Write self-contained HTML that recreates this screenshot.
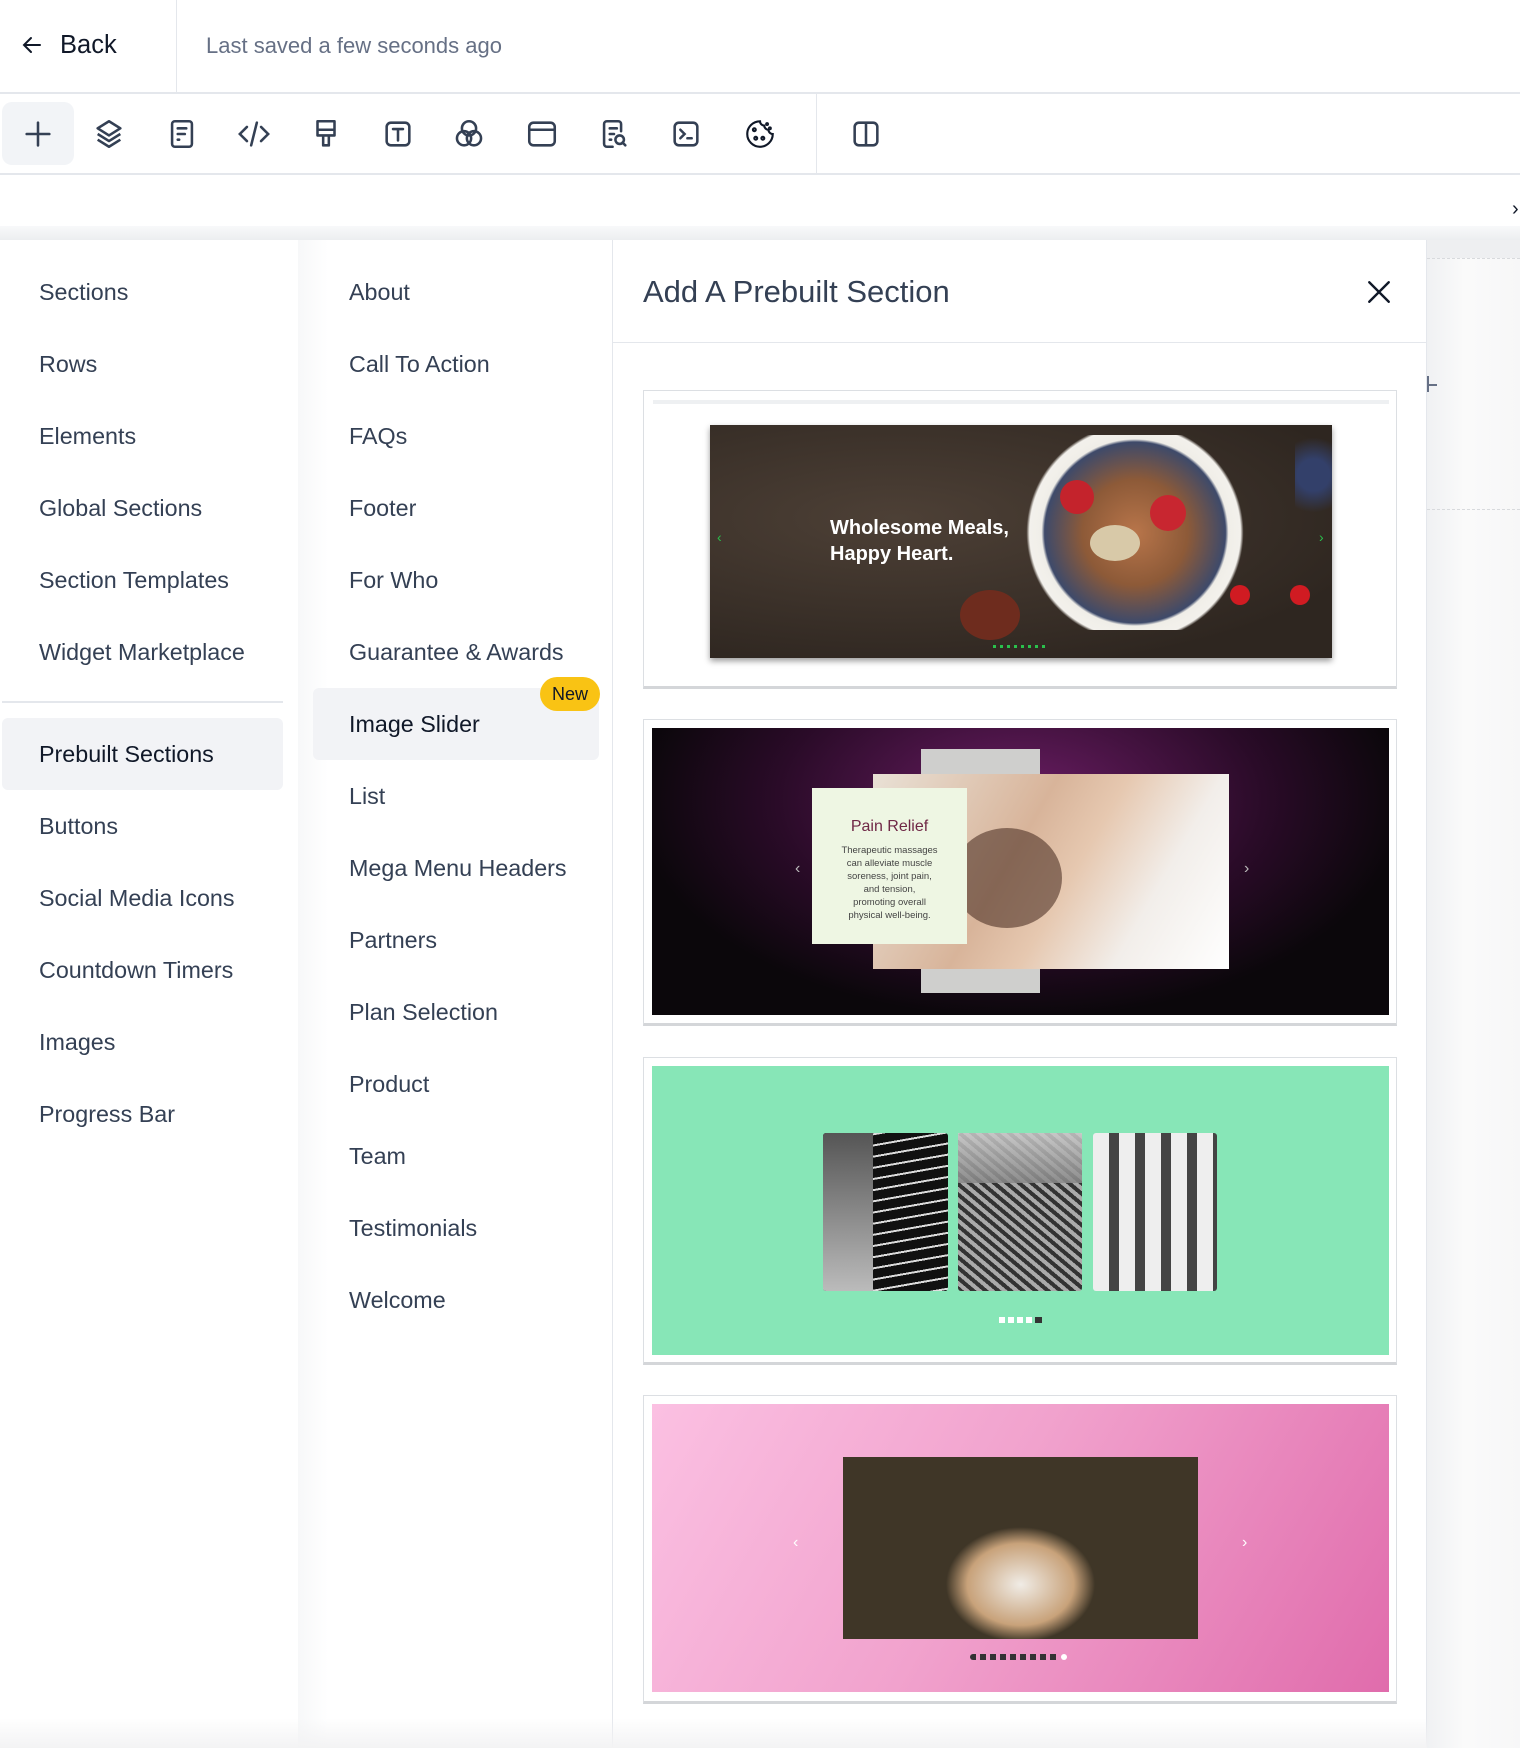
<!DOCTYPE html>
<html><head><meta charset="utf-8"><style>
*{box-sizing:border-box;margin:0;padding:0}
body{width:1520px;height:1748px;position:relative;overflow:hidden;background:#fff;font-family:"Liberation Sans",sans-serif;color:#344054}
.a{position:absolute}
.nav{position:absolute;font-size:23.3px;color:#344054;line-height:26px;white-space:nowrap}
.ic{position:absolute;top:117px;width:34px;height:34px}
.card{position:absolute;left:643px;width:754px;border:1px solid #dcdfe3;border-bottom:3px solid #d4d6d9;background:#fff}
</style></head><body>
<!-- header -->
<svg class="a" style="left:20px;top:33px" width="24" height="24" viewBox="0 0 24 24" fill="none" stroke="#101828" stroke-width="2" stroke-linecap="round"><path d="M20 12H4M11 5l-7 7 7 7"/></svg>
<div class="a" style="left:60px;top:31px;font-size:25.5px;color:#101828">Back</div>
<div class="a" style="left:176px;top:0;width:1px;height:92px;background:#e4e7ec"></div>
<div class="a" style="left:206px;top:33px;font-size:22px;color:#667085">Last saved a few seconds ago</div>
<div class="a" style="left:0;top:92px;width:1520px;height:2px;background:#e4e7ec"></div>
<!-- toolbar -->
<div class="a" style="left:2px;top:102px;width:72px;height:63px;background:#f2f4f7;border-radius:10px"></div>
<svg class="ic" style="left:21px" viewBox="0 0 24 24" fill="none" stroke="#344054" stroke-width="1.8" stroke-linecap="round"><path d="M12 4v16M4 12h16"/></svg>
<svg class="ic" style="left:92px" viewBox="0 0 24 24" fill="none" stroke="#344054" stroke-width="1.8" stroke-linejoin="round"><path d="M12 3l8 5-8 5-8-5z"/><path d="M4 12l8 5 8-5"/><path d="M4 16l8 5 8-5"/></svg>
<svg class="ic" style="left:165px" viewBox="0 0 24 24" fill="none" stroke="#344054" stroke-width="1.8" stroke-linecap="round"><rect x="5" y="3" width="14" height="18" rx="2"/><path d="M9 8h6M9 12h5M9 16h1"/></svg>
<svg class="ic" style="left:237px" viewBox="0 0 24 24" fill="none" stroke="#344054" stroke-width="1.8" stroke-linecap="round"><path d="M7 7l-5 5 5 5M17 7l5 5-5 5M14 4l-4 16"/></svg>
<svg class="ic" style="left:309px" viewBox="0 0 24 24" fill="none" stroke="#344054" stroke-width="1.8" stroke-linejoin="round"><path d="M6 3h12v10H6zM6 9h12M10 13h4v7h-4z"/></svg>
<svg class="ic" style="left:381px" viewBox="0 0 24 24" fill="none" stroke="#344054" stroke-width="1.8" stroke-linecap="round"><rect x="4" y="4" width="16" height="16" rx="3"/><path d="M8.5 8.5h7M12 8.5v8"/></svg>
<svg class="ic" style="left:452px" viewBox="0 0 24 24" fill="none" stroke="#344054" stroke-width="1.8"><circle cx="12" cy="8" r="5"/><circle cx="8.5" cy="15" r="5"/><circle cx="15.5" cy="15" r="5"/></svg>
<svg class="ic" style="left:525px" viewBox="0 0 24 24" fill="none" stroke="#344054" stroke-width="1.8"><rect x="3" y="4" width="18" height="16" rx="3"/><path d="M3 9h18"/></svg>
<svg class="ic" style="left:597px" viewBox="0 0 24 24" fill="none" stroke="#344054" stroke-width="1.8" stroke-linecap="round"><path d="M11 21H7a2 2 0 0 1-2-2V5a2 2 0 0 1 2-2h8a2 2 0 0 1 2 2v5"/><path d="M9 8h5M9 12h3M9 16h1"/><circle cx="16" cy="16" r="3"/><path d="M18 18l2 2"/></svg>
<svg class="ic" style="left:669px" viewBox="0 0 24 24" fill="none" stroke="#344054" stroke-width="1.8" stroke-linecap="round"><rect x="4" y="4" width="16" height="16" rx="3"/><path d="M8 9l3 3-3 3M13 15h3"/></svg>
<svg class="ic" style="left:743px" viewBox="0 0 24 24" fill="none" stroke="#101828" stroke-width="1.5"><path d="M12 3a9 9 0 1 0 9 9 3 3 0 0 1-3-3 3 3 0 0 1-3-3 3 3 0 0 1-3-3z"/><circle cx="8" cy="9" r="1"/><circle cx="9" cy="15" r="1"/><circle cx="14" cy="15" r="1"/><circle cx="17" cy="5" r=".6"/><circle cx="19" cy="8" r=".6"/></svg>
<div class="a" style="left:816px;top:94px;width:1px;height:80px;background:#e4e7ec"></div>
<svg class="ic" style="left:849px" viewBox="0 0 24 24" fill="none" stroke="#344054" stroke-width="1.8"><rect x="4" y="4" width="16" height="16" rx="3"/><path d="M12 4v16"/></svg>
<div class="a" style="left:0;top:173px;width:1520px;height:2px;background:#e4e7ec"></div>
<div class="a" style="left:1512px;top:198px;font-size:20px;color:#101828">›</div>
<div class="a" style="left:0;top:226px;width:1520px;height:14px;background:linear-gradient(#f8f9fa,#eceef0)"></div>
<!-- right gray area -->
<div class="a" style="left:1427px;top:240px;width:93px;height:1508px;background:linear-gradient(90deg,#f0f1f3,#fafafa 40%,#f7f7f8)"></div>
<div class="a" style="left:1427px;top:240px;width:93px;height:18px;background:#eeeff1"></div>
<div class="a" style="left:1427px;top:258px;width:93px;border-top:1px dashed #d8dadd"></div>
<div class="a" style="left:1427px;top:509px;width:93px;border-top:1px dashed #d8dadd"></div>
<div class="a" style="left:1427px;top:376px;width:2px;height:16px;background:#667085"></div>
<div class="a" style="left:1427px;top:384px;width:10px;height:2px;background:#667085"></div>
<!-- left column -->
<div class="a" style="left:0;top:240px;width:298px;height:1508px;background:#fff"></div>
<div class="nav" style="left:39px;top:279px">Sections</div>
<div class="nav" style="left:39px;top:351px">Rows</div>
<div class="nav" style="left:39px;top:423px">Elements</div>
<div class="nav" style="left:39px;top:495px">Global Sections</div>
<div class="nav" style="left:39px;top:567px">Section Templates</div>
<div class="nav" style="left:39px;top:639px">Widget Marketplace</div>
<div class="a" style="left:2px;top:701px;width:281px;height:2px;background:#e4e7ec"></div>
<div class="a" style="left:2px;top:718px;width:281px;height:72px;background:#f2f3f6;border-radius:6px"></div>
<div class="nav" style="left:39px;top:741px;color:#101828">Prebuilt Sections</div>
<div class="nav" style="left:39px;top:813px">Buttons</div>
<div class="nav" style="left:39px;top:885px">Social Media Icons</div>
<div class="nav" style="left:39px;top:957px">Countdown Timers</div>
<div class="nav" style="left:39px;top:1029px">Images</div>
<div class="nav" style="left:39px;top:1101px">Progress Bar</div>
<!-- second column -->
<div class="a" style="left:298px;top:240px;width:315px;height:1508px;background:linear-gradient(90deg,#f7f8f9,#fff 30px);border-right:1px solid #e4e7ec"></div>
<div class="nav" style="left:349px;top:279px">About</div>
<div class="nav" style="left:349px;top:351px">Call To Action</div>
<div class="nav" style="left:349px;top:423px">FAQs</div>
<div class="nav" style="left:349px;top:495px">Footer</div>
<div class="nav" style="left:349px;top:567px">For Who</div>
<div class="nav" style="left:349px;top:639px">Guarantee &amp; Awards</div>
<div class="a" style="left:313px;top:688px;width:286px;height:72px;background:#f2f3f6;border-radius:6px"></div>
<div class="nav" style="left:349px;top:711px;color:#101828">Image Slider</div>
<div class="a" style="left:540px;top:677px;width:60px;height:34px;background:#f9c314;border-radius:17px;font-size:18px;color:#101828;text-align:center;line-height:34px">New</div>
<div class="nav" style="left:349px;top:783px">List</div>
<div class="nav" style="left:349px;top:855px">Mega Menu Headers</div>
<div class="nav" style="left:349px;top:927px">Partners</div>
<div class="nav" style="left:349px;top:999px">Plan Selection</div>
<div class="nav" style="left:349px;top:1071px">Product</div>
<div class="nav" style="left:349px;top:1143px">Team</div>
<div class="nav" style="left:349px;top:1215px">Testimonials</div>
<div class="nav" style="left:349px;top:1287px">Welcome</div>
<!-- panel -->
<div class="a" style="left:613px;top:240px;width:814px;height:1508px;background:#fff;border-right:1px solid #e4e7ec"></div>
<div class="a" style="left:643px;top:274px;font-size:31px;color:#344054">Add A Prebuilt Section</div>
<svg class="a" style="left:1366px;top:279px" width="26" height="26" viewBox="0 0 24 24" stroke="#101828" stroke-width="2.2" stroke-linecap="round"><path d="M3 3l18 18M21 3L3 21"/></svg>
<div class="a" style="left:613px;top:342px;width:814px;height:1px;background:#e4e7ec"></div>
<!-- card1 -->
<div class="card" style="top:390px;height:299px">
 <div class="a" style="left:9px;top:9px;width:736px;height:4px;background:#eef0f2"></div>
 <div class="a" style="left:66px;top:34px;width:622px;height:233px;background:radial-gradient(ellipse at 30% 40%,#4d4036,#2e2620 80%);box-shadow:0 3px 6px rgba(0,0,0,.4);overflow:hidden">
  <div class="a" style="left:310px;top:10px;width:230px;height:195px;background:radial-gradient(circle at 50% 50%,#b8754a 0,#8d5a38 35%,#3e4a6a 60%,#f0eee8 62%,#f3f1ec 70%,transparent 72%)"></div>
  <div class="a" style="left:350px;top:55px;width:34px;height:34px;border-radius:50%;background:#c4232c"></div>
  <div class="a" style="left:440px;top:70px;width:36px;height:36px;border-radius:50%;background:#c82630"></div>
  <div class="a" style="left:380px;top:100px;width:50px;height:36px;border-radius:50%;background:#d8c9a8"></div>
  <div class="a" style="left:250px;top:165px;width:60px;height:50px;border-radius:50%;background:#6e2c1e"></div>
  <div class="a" style="left:520px;top:160px;width:20px;height:20px;border-radius:50%;background:#d01b22"></div>
  <div class="a" style="left:580px;top:160px;width:20px;height:20px;border-radius:50%;background:#d01b22"></div>
  <div class="a" style="left:585px;top:0;width:37px;height:100px;background:radial-gradient(circle,#33406a 30%,transparent 70%)"></div>
  <div class="a" style="left:120px;top:90px;font-size:20px;font-weight:bold;color:#fff;line-height:26px">Wholesome Meals,<br>Happy Heart.</div>
  <div class="a" style="left:7px;top:104px;color:#2ac04c;font-size:14px">‹</div>
  <div class="a" style="left:609px;top:104px;color:#2ac04c;font-size:14px">›</div>
  <div class="a" style="left:283px;top:220px;width:55px;height:3px;background:repeating-linear-gradient(90deg,#2ac04c 0 3px,transparent 3px 7px)"></div>
 </div>
</div>
<!-- card2 -->
<div class="card" style="top:719px;height:307px">
 <div class="a" style="left:8px;top:8px;width:737px;height:287px;background:radial-gradient(ellipse 55% 80% at 50% 25%,#6a1d63,#2a0b28 60%,#0b070b 95%)">
  <div class="a" style="left:269px;top:21px;width:119px;height:244px;background:#cfcfcd"></div>
  <div class="a" style="left:221px;top:46px;width:356px;height:195px;background:linear-gradient(120deg,#e9e1d6,#d8b49a 40%,#e6c8b0 55%,#f2eeea 75%,#fff)"></div>
  <div class="a" style="left:300px;top:100px;width:110px;height:100px;border-radius:50%;background:#4e3226;opacity:.6"></div>
  <div class="a" style="left:160px;top:60px;width:155px;height:156px;background:#eef6e3;text-align:center">
   <div style="margin-top:30px;font-size:16px;color:#6f2846">Pain Relief</div>
   <div style="margin-top:8px;font-size:9.5px;line-height:13px;color:#444">Therapeutic massages<br>can alleviate muscle<br>soreness, joint pain,<br>and tension,<br>promoting overall<br>physical well-being.</div>
  </div>
  <div class="a" style="left:143px;top:132px;color:#bbb;font-size:16px">‹</div>
  <div class="a" style="left:592px;top:132px;color:#bbb;font-size:16px">›</div>
 </div>
</div>
<!-- card3 -->
<div class="card" style="top:1057px;height:308px">
 <div class="a" style="left:8px;top:8px;width:737px;height:289px;background:#87e6b7">
  <div class="a" style="left:171px;top:67px;width:125px;height:158px;background:repeating-linear-gradient(170deg,#111 0 9px,#ddd 9px 11px);border-radius:3px"></div>
  <div class="a" style="left:171px;top:67px;width:50px;height:158px;background:linear-gradient(#555,#bbb);border-radius:3px 0 0 3px"></div>
  <div class="a" style="left:306px;top:67px;width:124px;height:158px;background:repeating-linear-gradient(40deg,#333 0 4px,#aaa 4px 8px),#888;border-radius:3px"></div>
  <div class="a" style="left:306px;top:67px;width:124px;height:50px;background:linear-gradient(#ccc,#888);opacity:.85"></div>
  <div class="a" style="left:441px;top:67px;width:124px;height:158px;background:repeating-linear-gradient(90deg,#eee 0 16px,#444 16px 26px);border-radius:3px"></div>
  <div class="a" style="left:347px;top:251px;width:34px;height:6px;background:repeating-linear-gradient(90deg,#fff 0 6px,transparent 6px 9px)"></div>
  <div class="a" style="left:383px;top:251px;width:7px;height:6px;background:#333"></div>
 </div>
</div>
<!-- card4 -->
<div class="card" style="top:1395px;height:309px">
 <div class="a" style="left:8px;top:8px;width:737px;height:288px;background:linear-gradient(120deg,#fbc0e2,#f1a2cd 45%,#e06cac)">
  <div class="a" style="left:191px;top:53px;width:355px;height:182px;background:radial-gradient(ellipse 30% 45% at 50% 70%,#f0ece6,#c8a27a 50%,transparent 70%),#3f3627"></div>
  <div class="a" style="left:141px;top:130px;color:#fff;font-size:16px">‹</div>
  <div class="a" style="left:590px;top:130px;color:#fff;font-size:16px">›</div>
  <div class="a" style="left:318px;top:250px;width:90px;height:6px;background:repeating-linear-gradient(90deg,#333 0 6px,transparent 6px 10px);border-radius:3px"></div>
  <div class="a" style="left:409px;top:250px;width:6px;height:6px;background:#fff;border-radius:50%"></div>
 </div>
</div>
<div class="a" style="left:0;top:1718px;width:1427px;height:30px;background:linear-gradient(rgba(245,245,246,0),#f3f3f4)"></div>
</body></html>
